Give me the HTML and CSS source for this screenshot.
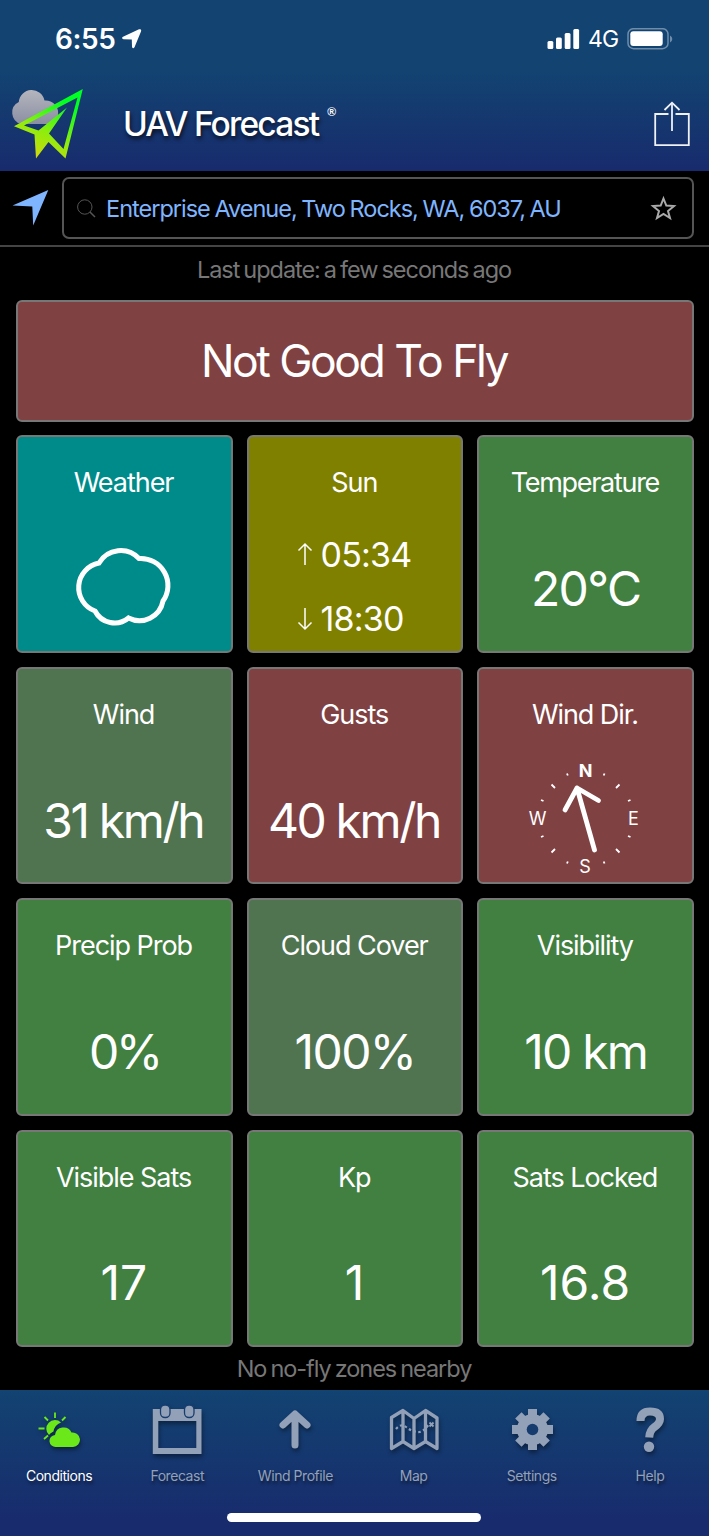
FILE: index.html
```html
<!DOCTYPE html>
<html lang="en">
<head>
    <meta charset="UTF-8">
    <meta name="viewport" content="width=device-width, initial-scale=1.0">
    <title>UAV Forecast</title>
    <link rel="stylesheet" href="styles.css">
</head>
<body>

    <header class="header">
        <div class="status-bar">
            <span class="time">6:55</span>
            <svg class="location" viewBox="122 29 20 20" width="20" height="20"><path d="M139 29.300 Q141.800 28.500 141 31.500 L134.500 47.300 Q133 49.500 132 47 L131.800 39.500 L123.500 39.200 Q121 38.200 123 36.800 Z" fill="#fff"/></svg>
            <svg class="signal" viewBox="547 28 33 22" width="33" height="22" fill="#fff">
                <rect x="547.500" y="41" width="5.800" height="8" rx="1.500"/>
                <rect x="556" y="37.500" width="5.800" height="11.500" rx="1.500"/>
                <rect x="564.700" y="33" width="5.800" height="16" rx="1.500"/>
                <rect x="573.300" y="29" width="5.800" height="20" rx="1.500"/>
            </svg>
            <span class="network">4G</span>
            <svg class="battery" viewBox="627.500 28 46 23" width="46" height="23">
                <rect x="628.500" y="28.700" width="40" height="20" rx="5.500" fill="none" stroke="#6f8dab" stroke-width="1.500"/>
                <rect x="630.800" y="31.200" width="32.400" height="14.800" rx="3" fill="#fff"/>
                <path d="M670.500 35.500 Q672.800 36.500 672.800 39 Q672.800 41.500 670.500 42.500 Z" fill="#6f8dab"/>
            </svg>
        </div>
        <div class="title-bar">
            <svg class="logo" viewBox="8 86 78 76" width="78" height="76">
                <defs>
                    <linearGradient id="plane" x1="0.750" y1="0" x2="0.250" y2="1">
                        <stop offset="0.150" stop-color="#0f2"/>
                        <stop offset="0.600" stop-color="#8bee0d"/>
                        <stop offset="1" stop-color="#d9d60d"/>
                    </linearGradient>
                    <linearGradient id="cloud" x1="0" y1="0" x2="0" y2="1">
                        <stop offset="0" stop-color="#b4b5bd"/>
                        <stop offset="1" stop-color="#8b8fa3"/>
                    </linearGradient>
                </defs>
                <path d="M21 124 A11.800 11.800 0 0 1 18.800 102 A13 13 0 0 1 44.500 100.500 A12.500 12.500 0 0 1 57.500 117 L50 124 Z" fill="url(#cloud)"/>
                <path fill-rule="evenodd" d="M82.800 89 L65.500 158.600 L48.500 142 L36 158.600 L34.500 134.500 L14 126.300 Z M77.500 97.500 L24 125.500 L38.500 130.500 L67 107.500 L49 133.500 L63.500 149 Z" fill="url(#plane)"/>
            </svg>
            <h1 class="title">UAV Forecast</h1>
            <span class="registered">®</span>
            <svg class="share" viewBox="652 100 40 48" width="40" height="48" fill="none" stroke="#eef1f6" stroke-width="1.800">
                <path d="M668.500 114 H655.200 V145.200 H688.800 V114 H675.500 M672 131 V103"/>
                <path d="M664.500 110 L672 102.700 L679.500 110"/>
            </svg>
        </div>
    </header>

    <div class="search">
        <svg viewBox="11 189.500 39 39" width="39" height="39"><path d="M48.300 190.500 L33.200 226 L32.300 207 L12.500 206 Z" fill="#7fb5ff"/></svg>
        <div class="search-box">
            <svg viewBox="76 198.500 20 20" width="20" height="20" fill="none" stroke="#555"><circle cx="84.800" cy="207.500" r="7.200"/><path d="M90 212.500 L95 217.500" stroke-width="1.500"/></svg>
            <span class="address">Enterprise Avenue, Two Rocks, WA, 6037, AU</span>
            <svg viewBox="649 195 28 28" width="28" height="28"><path d="M663.500 199.500 L666.300 206.500 L674 207 L668 212 L670 219 L663.500 215 L657 219 L659 212 L653 207 L660.700 206.500 Z" fill="none" stroke="#aaa" stroke-width="2"/></svg>
        </div>
    </div>

    <main class="conditions">
        <p class="update">Last update: a few seconds ago</p>
        <div class="verdict">Not Good To Fly</div>

        <div class="grid">
            <div class="tile teal">
                <div class="name">Weather</div>
                <svg class="weather" viewBox="74 545 100 84" width="100" height="84"><path d="M99 563 A25 25 0 0 1 139 558.500 A27 27 0 0 1 163 601 A24 24 0 0 1 128.500 618 A22 22 0 0 1 95 611 A25 25 0 0 1 99 563 Z" fill="none" stroke="#fff" stroke-width="5"/></svg>
            </div>
            <div class="tile olive">
                <div class="name">Sun</div>
                <div class="sun-times">
                    <div class="sun-time"><svg viewBox="0 0 16 24" width="16" height="24"><path d="M8 23 V2 M1.500 8.500 L8 2 L14.500 8.500"/></svg><span>05:34</span></div>
                    <div class="sun-time"><svg viewBox="0 0 16 24" width="16" height="24"><path d="M8 1 V22 M1.500 15.500 L8 22 L14.500 15.500"/></svg><span>18:30</span></div>
                </div>
            </div>
            <div class="tile green">
                <div class="name temperature">Temperature</div>
                <div class="value">20°C</div>
            </div>
            <div class="tile sage">
                <div class="name">Wind</div>
                <div class="value speed">31 km/h</div>
            </div>
            <div class="tile red">
                <div class="name">Gusts</div>
                <div class="value speed">40 km/h</div>
            </div>
            <div class="tile red">
                <div class="name">Wind Dir.</div>
                <svg class="compass" viewBox="521 760 130 120" width="130" height="120">
                    <g fill="#fff" text-anchor="middle">
                        <text class="north" x="585.500" y="777">N</text>
                        <text x="633.500" y="825">E</text>
                        <text x="585" y="873">S</text>
                        <text x="537.500" y="825">W</text>
                    </g>
                    <path class="ticks" d="M567 773.500 l.8 2 M604.500 773.500 l-.8 2 M551.500 784.500 l3.500 3.500 M619.500 784.500 l-3.500 3.500 M541 800 l2.500 1 M630.500 800 l-2.500 1 M541 837 l2.500 -1 M630.500 837 l-2.500 -1 M551.500 852.500 l3.500 -3.500 M619.500 852.500 l-3.500 -3.500 M567 863.500 l.8 -2 M604.500 863.500 l-.8 -2"/>
                    <path class="needle" d="M594.500 850 L577 788 M565 810 L577 788 L598.500 800.500"/>
                </svg>
            </div>
            <div class="tile green">
                <div class="name">Precip Prob</div>
                <div class="value percent">0%</div>
            </div>
            <div class="tile sage">
                <div class="name">Cloud Cover</div>
                <div class="value">100%</div>
            </div>
            <div class="tile green">
                <div class="name">Visibility</div>
                <div class="value distance">10 km</div>
            </div>
            <div class="tile green">
                <div class="name">Visible Sats</div>
                <div class="value number">17</div>
            </div>
            <div class="tile green">
                <div class="name">Kp</div>
                <div class="value number">1</div>
            </div>
            <div class="tile green">
                <div class="name">Sats Locked</div>
                <div class="value number">16.8</div>
            </div>
        </div>

        <p class="zones">No no-fly zones nearby</p>
    </main>

    <nav class="tabs">
        <a class="tab active">
            <svg viewBox="34 1402 50 56" width="50" height="56" fill="#6be81a">
                <path d="M55 1412.500 V1418 M44.500 1417 L48 1420.500 M65.500 1417 L62 1420.500 M38.500 1428.500 H44.500 M44 1439 L48 1435.500" stroke="#6be81a" stroke-width="1.800"/>
                <path d="M61 1422.500 Q54.500 1425 53.500 1431.500 Q50 1433 49 1435 A7.500 7.500 0 1 1 61 1422.500 Z"/>
                <path d="M56 1447 A6 6 0 0 1 55 1435 A8.700 8.700 0 0 1 71.500 1432.500 A7.300 7.300 0 1 1 73 1447 Z"/>
            </svg>
            <span>Conditions</span>
        </a>
        <a class="tab">
            <svg viewBox="151.500 1402 52 56" width="52" height="56">
                <path fill-rule="evenodd" d="M153.300 1409 H202 V1454 H153.300 Z M158.800 1421 V1448 H196.800 V1421 Z"/>
                <rect x="161" y="1405" width="9.500" height="12.500" rx="4.500" stroke="#173c6d" stroke-width="1.300"/>
                <rect x="185" y="1405" width="9.500" height="12.500" rx="4.500" stroke="#173c6d" stroke-width="1.300"/>
            </svg>
            <span>Forecast</span>
        </a>
        <a class="tab">
            <svg viewBox="270 1402 50 56" width="50" height="56"><path d="M295 1445 V1415 M283 1425 L295 1414 L307 1425" fill="none" stroke="#93a1b8" stroke-width="7" stroke-linecap="round" stroke-linejoin="round"/></svg>
            <span>Wind Profile</span>
        </a>
        <a class="tab">
            <svg viewBox="388 1402 52 56" width="52" height="56" fill="none" stroke="#93a1b8" stroke-width="3.300" stroke-linejoin="round">
                <path d="M391.500 1417.500 L403 1410.500 L414 1418.500 L425.500 1410.500 L437 1418 V1448.500 L425.500 1441.500 L414 1448.500 L403 1441.500 L391.500 1448.500 Z M403 1411 V1441 M414 1419 V1448 M425.500 1411 V1441"/>
                <path d="M396 1429 Q401 1423 406 1427 T417 1432 T429 1424" stroke-width="2.200" stroke-dasharray="2.500 2.500"/>
                <path d="M429.500 1422.500 l4 4 m0 -4 l-4 4" stroke-width="1.800"/>
            </svg>
            <span>Map</span>
        </a>
        <a class="tab">
            <svg viewBox="507 1402 50 56" width="50" height="56">
                <path d="M528 1409 H537 V1450 H528 Z M512 1425 V1434 H553 V1425 Z"/>
                <path d="M528 1409.500 H537 V1449.500 H528 Z M512.500 1425 V1434 H552.500 V1425 Z" transform="rotate(45 532.500 1429.500)"/>
                <circle cx="532.500" cy="1429.500" r="15.500"/>
                <circle cx="532.500" cy="1429.500" r="5.800" fill="#163b6e"/>
            </svg>
            <span>Settings</span>
        </a>
        <a class="tab">
            <svg viewBox="625 1402 50 56" width="50" height="56"><path d="M640.500 1421 Q640.500 1411.500 650 1411.500 Q660 1411.500 660 1419 Q660 1423 654.500 1427 Q649.500 1430.500 649.200 1437.500" fill="none" stroke="#93a1b8" stroke-width="8"/><circle cx="649" cy="1446.700" r="5.200"/></svg>
            <span>Help</span>
        </a>
        <div class="home-indicator"></div>
    </nav>

</body>
</html>
```
FILE: styles.css
```css
* {
    box-sizing: border-box;
}

body {
    margin: 0;
    font-family: Inter, sans-serif;
    background-color: #000;
    color: #fff;
    width: 709px;
    height: 1536px;
    overflow: hidden;
}

svg {
    display: block;
    flex-shrink: 0;
}

.header {
    height: 171px;
    background: linear-gradient(#124371 0%, #124371 42%, #182b6d 100%);
}

.status-bar {
    display: flex;
    align-items: center;
    height: 78px;
    padding: 0 36px 0 55px;
}

.time {
    width: 67px;
    font-size: 28px;
    font-weight: 600;
    letter-spacing: -0.4px;
    white-space: nowrap;
}

.signal {
    margin-left: auto;
}

.network {
    width: 39px;
    margin-left: 8px;
    font-size: 23px;
    letter-spacing: -0.8px;
}

.title-bar {
    display: flex;
    align-items: center;
    height: 91px;
    padding: 0 17px 0 8px;
}

.title {
    margin: 0 0 0 37px;
    font-size: 33.500px;
    font-weight: 500;
    letter-spacing: -1.82px;
    text-shadow: 1px 3px 4px rgba(0, 0, 0, 0.7);
    white-space: nowrap;
}

.registered {
    margin: -23px 0 0 9px;
    font-family: "Liberation Sans", sans-serif;
    font-size: 12px;
    font-weight: 700;
}

.share {
    margin-left: auto;
}

.search {
    display: flex;
    align-items: center;
    gap: 12px;
    height: 76px;
    padding: 0 15px 0 11px;
    border-bottom: 2px solid #444;
}

.search-box {
    display: flex;
    align-items: center;
    flex: 1;
    height: 62px;
    padding: 0 15px 0 12px;
    border: 2px solid #555;
    border-radius: 7px;
}

.address {
    flex: 1;
    margin-left: 10px;
    color: #7fb5ff;
    font-size: 23.500px;
    letter-spacing: -1px;
    word-spacing: -1px;
    white-space: nowrap;
}

.conditions {
    height: 1143px;
    padding: 0 15px 0 16px;
}

.update,
.zones {
    margin: 0;
    color: #777;
    font-size: 23.500px;
    letter-spacing: -1.05px;
    word-spacing: -1.5px;
    line-height: 29px;
    text-align: center;
}

.update {
    padding: 8px 2px 16px 0;
}

.verdict {
    height: 122px;
    margin-bottom: 13px;
    padding-right: 2px;
    border: 2px solid #777;
    border-radius: 6px;
    background-color: #804143;
    font-size: 44.500px;
    letter-spacing: -2.5px;
    word-spacing: 1px;
    line-height: 118px;
    text-align: center;
}

.grid {
    display: grid;
    grid-template-columns: repeat(3, 1fr);
    grid-auto-rows: 217.500px;
    gap: 14px;
}

.tile {
    display: flex;
    flex-direction: column;
    align-items: center;
    padding-top: 29px;
    border: 2px solid #777;
    border-radius: 6px;
}

.teal { background-color: #008b8b; }
.olive { background-color: #808000; }
.green { background-color: #418041; }
.sage { background-color: #507350; }
.red { background-color: #804143; }

.name {
    padding-right: 1.500px;
    font-size: 27px;
    letter-spacing: -1.05px;
    line-height: 34px;
    white-space: nowrap;
}

.temperature {
    letter-spacing: -1.3px;
}

.value {
    margin-top: 59px;
    font-size: 48px;
    letter-spacing: -1.6px;
    line-height: 60px;
    white-space: nowrap;
}

.speed {
    padding-right: 2px;
    letter-spacing: -2.4px;
    word-spacing: 0;
}

.distance {
    letter-spacing: -1.8px;
}

.percent {
    letter-spacing: -3.5px;
}

.number {
    padding-right: 1px;
    letter-spacing: 0;
    line-height: 58px;
}

.weather {
    margin-top: 45px;
}

.sun-times {
    margin-top: 22px;
    padding-right: 2px;
}

.sun-time {
    display: flex;
    align-items: center;
    gap: 8px;
    height: 64.500px;
    font-size: 34px;
    letter-spacing: -0.8px;
}

.sun-time path {
    fill: none;
    stroke: #fff;
    stroke-width: 1.500;
}

.compass {
    margin-top: 28px;
    font-size: 18px;
}

.north {
    font-weight: 700;
}

.ticks {
    stroke: #fff;
    stroke-width: 1.800;
}

.needle {
    fill: none;
    stroke: #fff;
    stroke-width: 4.800;
    stroke-linecap: round;
    stroke-linejoin: round;
}

.zones {
    padding: 7px 2px 0 0;
}

.tabs {
    display: grid;
    grid-template-columns: repeat(6, 1fr);
    grid-template-rows: 116px auto;
    height: 146px;
    background: linear-gradient(#124371, #182b6d 90%);
}

.tab {
    display: flex;
    flex-direction: column;
    align-items: center;
    padding-top: 12px;
    color: #93a1b8;
    fill: #93a1b8;
    font-size: 14px;
    letter-spacing: -0.45px;
    text-shadow: 1px 3px 3px rgba(0, 0, 0, 0.45);
    white-space: nowrap;
}

.tab svg {
    filter: drop-shadow(1px 3px 2px rgba(0, 0, 0, 0.4));
}

.tab span {
    margin-top: 9px;
    line-height: 18px;
}

.tab.active {
    color: #fff;
}

.home-indicator {
    grid-column: 1 / -1;
    justify-self: center;
    width: 254px;
    height: 9px;
    margin-top: 7px;
    border-radius: 5px;
    background-color: #fff;
}
```
